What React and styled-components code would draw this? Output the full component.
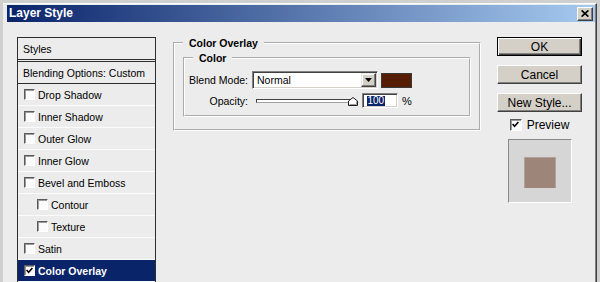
import React from 'react';
import styled, { createGlobalStyle } from 'styled-components';

const GlobalStyle = createGlobalStyle`
  html, body {
    margin: 0;
    padding: 0;
    background: #cfcfcf;
  }
  body {
    font-family: "Liberation Sans", Arial, sans-serif;
    overflow: hidden;
  }
`;

const Window = styled.div`
  margin: 3px 3px 0 3px;
  height: 279px;
  box-sizing: border-box;
  background: #ececec;
  border-top: 1px solid #ffffff;
  border-right: 1px solid #404040;
  box-shadow: inset -1px 0 0 #808080;
  padding-top: 1px;
  overflow: hidden;
  display: flex;
  flex-direction: column;
`;

const TitleBar = styled.div`
  margin: 0 1px 0 4px;
  height: 17px;
  flex-shrink: 0;
  display: flex;
  align-items: center;
  justify-content: space-between;
  background: linear-gradient(to right, #0a246a, #a6caf0);
`;

const TitleText = styled.span`
  padding-left: 2px;
  color: #ffffff;
  font-size: 12px;
  font-weight: bold;
  line-height: 17px;
`;

const CloseButton = styled.div`
  width: 16px;
  height: 14px;
  margin-right: 2px;
  box-sizing: border-box;
  background: #d4d0c8;
  border: 1px solid;
  border-color: #ffffff #404040 #404040 #ffffff;
  box-shadow: inset -1px -1px 0 #808080;
  display: flex;
  align-items: center;
  justify-content: center;
`;

const Body = styled.div`
  flex: 1;
  display: flex;
  align-items: flex-start;
  padding: 15px 0 0 14px;
`;

const StylesList = styled.div`
  width: 139px;
  height: 260px;
  flex-shrink: 0;
  box-sizing: border-box;
  border: 1px solid #2e2e2e;
  font-size: 10.5px;
  color: #000000;
`;

const HeaderRow = styled.div`
  height: 21px;
  padding-left: 5px;
  display: flex;
  align-items: center;
  border-bottom: 3px double #2e2e2e;
`;

const BlendRow = styled.div`
  height: 21px;
  padding-left: 5px;
  display: flex;
  align-items: center;
  border-bottom: 1px solid #2e2e2e;
`;

const StyleRow = styled.div`
  height: 21px;
  padding-left: ${(p) => (p.$indent ? 19 : 6)}px;
  display: flex;
  align-items: center;
  gap: 3px;
  border-bottom: 1px solid #fbfbfb;
  background: ${(p) => (p.$selected ? '#0a246a' : 'transparent')};
  color: ${(p) => (p.$selected ? '#ffffff' : '#000000')};
  font-weight: ${(p) => (p.$selected ? 'bold' : 'normal')};
`;

const Box = styled.span`
  width: ${(p) => p.$size}px;
  height: ${(p) => p.$size}px;
  flex-shrink: 0;
  box-sizing: border-box;
  background: #fbfbfb;
  border: 1px solid;
  border-color: #5a5a5a #ffffff #ffffff #5a5a5a;
  box-shadow: inset 1px 1px 0 #9a9a9a;
  display: flex;
  align-items: center;
  justify-content: center;
`;

const Check = ({ checked, size = 11 }) => (
  <Box $size={size}>
    {checked && (
      <svg width="7" height="7" viewBox="0 0 7 7">
        <path d="M0.6 3 L2.6 5.2 L6.4 1" fill="none" stroke="#000" strokeWidth="1.6" />
      </svg>
    )}
  </Box>
);

const Group = styled.fieldset`
  margin: 0;
  min-inline-size: 0;
  box-sizing: border-box;
  width: ${(p) => p.$width}px;
  padding: ${(p) => p.$pad};
  border: 2px groove #ffffff;
  flex-shrink: 0;
`;

const PanelGroup = styled(Group)`
  margin-left: 17px;
`;

const Legend = styled.legend`
  margin-left: ${(p) => p.$shift || 0}px;
  padding: 1px 6px 0;
  font-size: 10.5px;
  font-weight: bold;
  line-height: 11px;
  color: #000000;
`;

const Fields = styled.div`
  display: grid;
  grid-template-columns: 57px 1fr;
  column-gap: 4px;
  row-gap: 4px;
  align-items: center;
  font-size: 10.5px;
  color: #000000;
`;

const Label = styled.span`
  justify-self: end;
  white-space: nowrap;
`;

const Line = styled.div`
  display: flex;
  align-items: center;
  height: ${(p) => p.$h}px;
`;

const Select = styled.div`
  width: 126px;
  height: 18px;
  box-sizing: border-box;
  background: #ffffff;
  border: 1px solid;
  border-color: #808080 #ffffff #ffffff #808080;
  box-shadow: inset 1px 1px 0 #404040, inset -1px -1px 0 #d4d0c8;
  padding: 1px;
  display: flex;
  align-items: center;
`;

const SelectText = styled.span`
  flex: 1;
  padding-left: 3px;
`;

const DropButton = styled.span`
  width: 15px;
  height: 14px;
  box-sizing: border-box;
  background: #d4d0c8;
  border: 1px solid;
  border-color: #e8e8e8 #404040 #404040 #e8e8e8;
  box-shadow: inset -1px -1px 0 #808080, inset 1px 1px 0 #ffffff;
  display: flex;
  align-items: center;
  justify-content: center;
`;

const Swatch = styled.span`
  width: 31px;
  height: 15px;
  margin-left: 3px;
  box-sizing: border-box;
  background: #561d00;
  border: 1px solid #3a3a3a;
`;

const Slider = styled.div`
  position: relative;
  width: 106px;
  height: 15px;
  display: flex;
  align-items: center;
`;

const Track = styled.div`
  flex: 1;
  margin: 0 6px 0 4px;
  height: 4px;
  box-sizing: border-box;
  background: #ffffff;
  border: 1px solid;
  border-color: #404040 #a0a0a0 #a0a0a0 #404040;
`;

const Thumb = styled.svg`
  position: absolute;
  right: 0;
  top: 4px;
`;

const NumberInput = styled.div`
  width: 36px;
  height: 15px;
  margin-left: 4px;
  box-sizing: border-box;
  background: #ffffff;
  border: 1px solid;
  border-color: #808080 #ffffff #ffffff #808080;
  box-shadow: inset 1px 1px 0 #404040, inset -1px -1px 0 #d4d0c8;
  padding-left: 4px;
  display: flex;
  align-items: center;
`;

const Selected = styled.span`
  background: #0a246a;
  color: #ffffff;
  font-size: 10px;
  line-height: 10px;
  padding: 0 0.5px;
`;

const Percent = styled.span`
  margin-left: 4px;
  font-size: 11px;
`;

const ButtonColumn = styled.div`
  width: 85px;
  margin-left: 16px;
  flex-shrink: 0;
  display: flex;
  flex-direction: column;
  align-items: center;
`;

const PushButton = styled.div`
  width: 85px;
  height: 19px;
  margin-bottom: 9px;
  box-sizing: border-box;
  background: #d4d0c8;
  border: 1px solid;
  border-color: ${(p) => (p.$default ? '#000000' : '#ffffff #404040 #404040 #ffffff')};
  box-shadow: ${(p) =>
    p.$default
      ? 'inset 1px 1px 0 #ffffff, inset -1px -1px 0 #404040, inset -2px -2px 0 #808080'
      : 'inset -1px -1px 0 #808080'};
  display: flex;
  align-items: center;
  justify-content: center;
  font-size: 12px;
  color: #000000;
`;

const PreviewRow = styled.div`
  margin-top: -3px;
  height: 13px;
  display: flex;
  align-items: center;
  gap: 5px;
  font-size: 12px;
  color: #000000;
`;

const PreviewBox = styled.div`
  margin-top: 8px;
  width: 64px;
  height: 64px;
  box-sizing: border-box;
  background: #d6d6d6;
  border: 1px solid;
  border-color: #8a8a8a #ffffff #ffffff #8a8a8a;
  display: flex;
  align-items: center;
  justify-content: center;
`;

const PreviewSwatch = styled.div`
  width: 32px;
  height: 31px;
  margin-top: 2px;
  box-sizing: border-box;
  background: #9d8579;
  border: 1px solid #b2a198;
  border-bottom-color: #9d8579;
`;

const styles = [
  { name: 'Drop Shadow' },
  { name: 'Inner Shadow' },
  { name: 'Outer Glow' },
  { name: 'Inner Glow' },
  { name: 'Bevel and Emboss' },
  { name: 'Contour', indent: true },
  { name: 'Texture', indent: true },
  { name: 'Satin' },
  { name: 'Color Overlay', selected: true },
];

const App = () => (
  <>
    <GlobalStyle />
    <Window>
      <TitleBar>
        <TitleText>Layer Style</TitleText>
        <CloseButton>
          <svg width="8" height="7" viewBox="0 0 8 7">
            <path d="M0.6 0.4 L7.4 6.6 M7.4 0.4 L0.6 6.6" stroke="#000" strokeWidth="1.7" />
          </svg>
        </CloseButton>
      </TitleBar>
      <Body>
        <StylesList>
          <HeaderRow>Styles</HeaderRow>
          <BlendRow>Blending Options: Custom</BlendRow>
          {styles.map((s) => (
            <StyleRow key={s.name} $indent={s.indent} $selected={s.selected}>
              <Check checked={s.selected} />
              {s.name}
            </StyleRow>
          ))}
        </StylesList>

        <PanelGroup $width={308} $pad="3px 8px 12px 8px">
          <Legend>Color Overlay</Legend>
          <Group $width={288} $pad="7px 8px 7px 6px">
            <Legend $shift={2}>Color</Legend>
            <Fields>
              <Label>Blend Mode:</Label>
              <Line $h={18}>
                <Select>
                  <SelectText>Normal</SelectText>
                  <DropButton>
                    <svg width="7" height="4" viewBox="0 0 7 4">
                      <polygon points="0,0 7,0 3.5,4" fill="#000" />
                    </svg>
                  </DropButton>
                </Select>
                <Swatch />
              </Line>
              <Label>Opacity:</Label>
              <Line $h={15}>
                <Slider>
                  <Track />
                  <Thumb width="10" height="9" viewBox="0 0 10 9">
                    <polygon points="0.5,4 5,0.5 9.5,4 9.5,8.5 0.5,8.5" fill="#fff" stroke="#1e1e1e" />
                    <polyline points="8.5,4.4 8.5,7.5 1.5,7.5" fill="none" stroke="#9a9a9a" />
                  </Thumb>
                </Slider>
                <NumberInput>
                  <Selected>100</Selected>
                </NumberInput>
                <Percent>%</Percent>
              </Line>
            </Fields>
          </Group>
        </PanelGroup>

        <ButtonColumn>
          <PushButton $default>OK</PushButton>
          <PushButton>Cancel</PushButton>
          <PushButton>New Style...</PushButton>
          <PreviewRow>
            <Check checked size={12} />
            Preview
          </PreviewRow>
          <PreviewBox>
            <PreviewSwatch />
          </PreviewBox>
        </ButtonColumn>
      </Body>
    </Window>
  </>
);

export default App;
